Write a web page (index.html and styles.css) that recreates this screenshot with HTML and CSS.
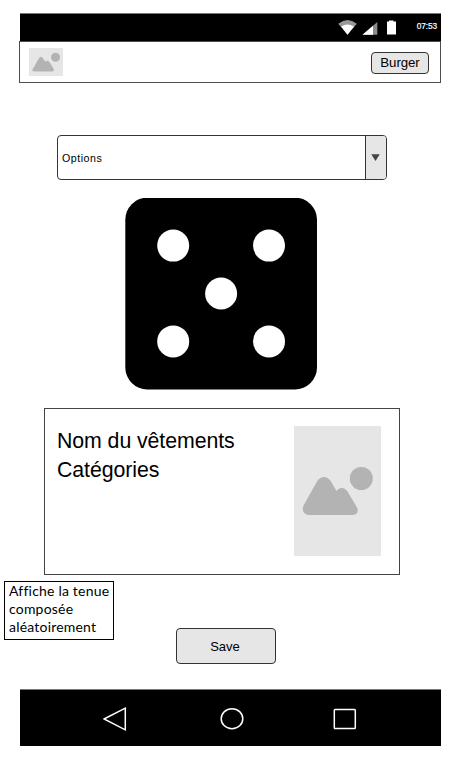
FILE: index.html
```html
<!DOCTYPE html>
<html lang="fr">
<head>
<meta charset="utf-8">
<title>Tenue aléatoire</title>
<link rel="stylesheet" href="styles.css">
</head>
<body>
<div class="statusbar">
  <svg class="status-icons" width="62" height="18" viewBox="0 0 62 18">
    <path d="M0.300 3.700Q9.500 -3.600 18.800 3.700L9.500 14.800Z" fill="#999"/>
    <path d="M3.200 6.600Q9.500 2.200 15.900 6.600L9.500 14.800Z" fill="#fff"/>
    <path d="M39.300 2V14.800H24.500Z" fill="#8c8c8c"/>
    <path d="M35 5.800V14.800H24.500Z" fill="#fff"/>
    <path d="M49 1.500H51V0.500H55.500V1.500H58V14.600H49V1.500Z" fill="#fff"/>
  </svg>
  <span class="clock">07:53</span>
</div>
<header class="header">
  <svg class="logo" width="34" height="28" viewBox="0 0 34 28">
    <rect width="34" height="28" fill="#e6e6e6"/>
    <path d="M5 19L9.800 10.500Q12 7.200 14.200 10.500L16.300 13.700Q18.900 11.400 21 14.800L24.400 20.500Q26 23.500 23 23.500H6Q2 23.500 4 20.500Z" fill="#b3b3b3"/>
    <circle cx="26.500" cy="9.200" r="4.500" fill="#b3b3b3"/>
  </svg>
  <button class="btn burger">Burger</button>
</header>
<main class="content">
  <div class="select">
    <span class="select-label">Options</span>
    <span class="select-arrow"><svg width="9" height="7" viewBox="0 0 9 7"><path d="M0.300 0.200H8.700L4.500 7Z" fill="#444"/></svg></span>
  </div>
  <svg class="dice" width="193" height="193" viewBox="0 0 193 193">
    <rect x="0.300" y="-0.300" width="191.700" height="191.700" rx="22"/>
    <g fill="#fff">
      <circle cx="48.200" cy="47.600" r="16"/>
      <circle cx="144" cy="47.600" r="16"/>
      <circle cx="96.100" cy="95.500" r="16"/>
      <circle cx="48.200" cy="143.400" r="16"/>
      <circle cx="144" cy="143.400" r="16"/>
    </g>
  </svg>
  <section class="card">
    <div class="card-text">
      <div>Nom du vêtements</div>
      <div>Catégories</div>
    </div>
    <svg class="photo" width="87" height="130" viewBox="0 0 87 130">
      <rect width="87" height="130" fill="#e6e6e6"/>
      <path d="M9.800 79L23 55.500C26.500 49.500 33.500 49.500 37 55.500L42.500 65C45 61 50.500 60.500 53.500 65.500L63 81.500C65 85.500 63 89 59 89H16C9.500 89 7.300 84 9.800 79Z" fill="#b3b3b3"/>
      <circle cx="67.300" cy="52.500" r="11.500" fill="#b3b3b3"/>
    </svg>
  </section>
  <div class="actions">
    <aside class="note">Affiche la tenue<br>composée<br>aléatoirement</aside>
    <button class="btn save">Save</button>
  </div>
</main>
<nav class="navbar">
  <svg width="24" height="26" viewBox="0 0 24 26"><path d="M1 13L22.300 2.200V23.800Z"/></svg>
  <svg width="24" height="24" viewBox="0 0 24 24"><ellipse cx="12" cy="11.700" rx="10.800" ry="10"/></svg>
  <svg width="24" height="24" viewBox="0 0 24 24"><rect x="1.300" y="2.600" width="21" height="19" rx="0.800"/></svg>
</nav>
</body>
</html>
```
FILE: styles.css
```css
* {
  box-sizing: border-box;
}

body {
  margin: 0;
  padding-top: 13px;
  width: 454px;
  height: 772px;
  background: #fff;
  color: #000;
  font-family: "Liberation Sans", Arial, sans-serif;
}

svg {
  display: block;
  flex: none;
}

.statusbar {
  display: flex;
  width: 421px;
  height: 28px;
  margin-left: 20px;
  padding: 6px 4px 0 318px;
  justify-content: space-between;
  background: #000;
  border-top: 1px solid #777;
}

.clock {
  color: #fff;
  font-size: 8.3px;
  line-height: 12px;
  letter-spacing: -0.1px;
  -webkit-text-stroke: 0.2px #fff;
}

.header {
  display: flex;
  justify-content: space-between;
  width: 422px;
  height: 42px;
  margin-left: 19px;
  padding: 6px 11px 0 9px;
  border: 1px solid #4d4d4d;
}

.btn {
  display: block;
  padding: 0;
  color: #000;
  font-family: inherit;
  background: #e6e6e6;
  border: 1px solid #333;
  border-radius: 4px;
}

.burger {
  width: 58px;
  height: 22px;
  margin-top: 4px;
  font-size: 13.3px;
  line-height: 20px;
  letter-spacing: -0.1px;
}

.select {
  display: flex;
  width: 330px;
  height: 45px;
  margin: 52px 0 0 57px;
  border: 1px solid #333;
  border-radius: 4px;
  overflow: hidden;
}

.select-label {
  flex: 1;
  padding-left: 4px;
  font-size: 10.67px;
  line-height: 45px;
  letter-spacing: 0.5px;
}

.select-arrow {
  display: flex;
  align-items: center;
  justify-content: center;
  width: 21px;
  padding-right: 1px;
  background: #e6e6e6;
  border-left: 1px solid #333;
}

.dice {
  margin: 18px 0 0 125px;
}

.card {
  display: flex;
  justify-content: space-between;
  width: 356px;
  height: 167px;
  margin: 17px 0 0 44px;
  padding: 17px 18px 0 12px;
  border: 1px solid #444;
}

.card-text {
  padding-top: 1px;
  font-size: 21.3px;
  line-height: 29px;
  letter-spacing: -0.07px;
}

.actions {
  display: flex;
  align-items: flex-start;
  height: 108px;
  padding: 6px 0 0 4px;
}

.note {
  width: 110px;
  height: 59px;
  padding: 0 0 0 4px;
  border: 1px solid #000;
  background: #fff;
  font-family: Lato, sans-serif;
  font-size: 14px;
  font-variant-ligatures: none;
  line-height: 18px;
  letter-spacing: 0.2px;
  white-space: nowrap;
}

.save {
  width: 100px;
  height: 36px;
  margin: 47px 0 0 62px;
  padding-right: 2px;
  font-size: 13px;
}

.navbar {
  display: flex;
  align-items: center;
  width: 421px;
  height: 57px;
  margin: 6px 0 0 20px;
  padding: 2px 84px 0 83px;
  justify-content: space-between;
  background: #000;
  border-top: 1px solid #777;
}

.navbar svg {
  fill: none;
  stroke: #fff;
  stroke-width: 1.5;
}

.navbar svg:nth-child(2) {
  margin-left: 3px;
}
```
